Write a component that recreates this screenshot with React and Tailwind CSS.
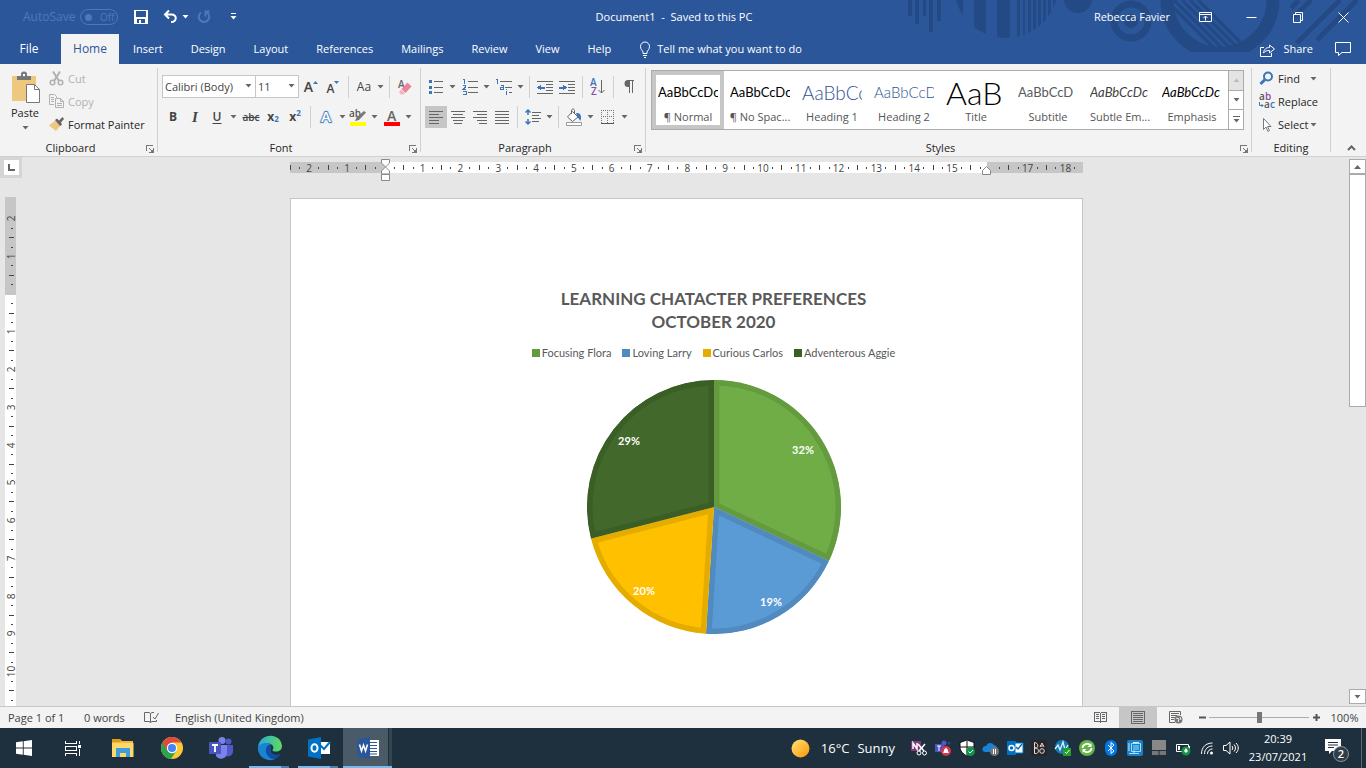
import React from "react";

const TABS = ["Insert", "Design", "Layout", "References", "Mailings", "Review", "View", "Help"];

const STYLES = [
    { name: "¶ Normal", sample: "AaBbCcDc", look: "text-[13px] text-black", active: true },
    { name: "¶ No Spac...", sample: "AaBbCcDc", look: "text-[13px] text-black" },
    { name: "Heading 1", sample: "AaBbCc", look: "text-[19px] font-light text-[#2f5496]" },
    { name: "Heading 2", sample: "AaBbCcD", look: "text-[15px] font-light text-[#2f5496]" },
    { name: "Title", sample: "AaB", look: "text-[32px] font-light text-black" },
    { name: "Subtitle", sample: "AaBbCcD", look: "text-[13px] text-[#5a5a5a]" },
    { name: "Subtle Em...", sample: "AaBbCcDc", look: "text-[13px] italic text-[#404040]" },
    { name: "Emphasis", sample: "AaBbCcDc", look: "text-[13px] italic text-black" },
];

const SLICES = [
    { label: "Focusing Flora", value: 32, fill: "#70ad47", edge: "#649b3f", x: 216, y: 75 },
    { label: "Loving Larry", value: 19, fill: "#5b9bd5", edge: "#518abf", x: 184, y: 227 },
    { label: "Curious Carlos", value: 20, fill: "#ffc000", edge: "#e5ac00", x: 57, y: 216 },
    { label: "Adventerous Aggie", value: 29, fill: "#43682b", edge: "#3b5d26", x: 42, y: 66 },
];

/* ---------- small shared parts ---------- */

function Svg({ w = 16, h = 16, children, ...rest }) {
    return (
        <svg width={w} height={h} viewBox={`0 0 ${w} ${h}`} fill="none" className="shrink-0 overflow-visible" aria-hidden="true" {...rest}>
            {children}
        </svg>
    );
}

function Caret({ color = "#666" }) {
    return (
        <Svg w={7} h={4}>
            <path d="M0.5 0h6L3.5 3.5z" fill={color} />
        </Svg>
    );
}

function Tool({ label, className = "", children }) {
    return (
        <button type="button" aria-label={label} className={`flex h-[22px] w-[22px] shrink-0 items-center justify-center ${className}`}>
            {children}
        </button>
    );
}

function Drop({ label }) {
    return (
        <button type="button" aria-label={`${label} options`} className="flex h-[22px] w-[10px] shrink-0 items-center justify-center">
            <Caret />
        </button>
    );
}

function Sep() {
    return <span className="mx-1 h-[22px] w-px shrink-0 bg-[#d2d0ce]" />;
}

function Group({ title, launcher = true, className = "", children }) {
    return (
        <section aria-label={title} className={`flex shrink-0 flex-col ${className}`}>
            <div className="h-[76px]">{children}</div>
            <div className="flex h-4 items-center">
                <span className="flex-1 text-center">{title}</span>
                {launcher && (
                    <button type="button" aria-label={`${title} settings`} className="flex w-4 justify-end pr-[3px]">
                        <Svg w={9} h={9} shapeRendering="crispEdges">
                            <path d="M1.5 7V1.5H8M4 4l3 3M8.5 4v4.5H4" stroke="#777" />
                            <path d="M5 8h3V5z" fill="#777" />
                        </Svg>
                    </button>
                )}
            </div>
        </section>
    );
}

function Divider() {
    return <span className="mt-1 h-[84px] w-px shrink-0 bg-[#d2d0ce]" />;
}

/* ---------- title bar and tabs ---------- */

function HeaderArt() {
    const bars = [[66, 7], [84, 12], [107, 13], [127, 3], [133, 2], [138, 3], [143, 3], [148, 3], [153, 3], [158, 3], [163, 3]];
    return (
        <svg width="476" height="64" viewBox="0 0 476 64" className="absolute top-0 right-0" aria-hidden="true">
            <defs>
                <clipPath id="disc"><circle cx="116" cy="-14" r="52" /></clipPath>
                <clipPath id="ring"><circle cx="330" cy="0" r="48" /></clipPath>
                <clipPath id="cut"><rect width="476" height="52" /></clipPath>
            </defs>
            <g fill="#244a85">
                <path d="M18 0h4v16h-4zM25 0h4v24h-4zM33 0h3v16h-3zM39 0h4v32h-4zM47 0h4v21h-4z" />
                <g clipPath="url(#disc)">
                    {bars.map(([x, w]) => <rect key={x} x={x} width={w} height="40" />)}
                </g>
                <circle cx="188" cy="-1" r="14" />
                <circle cx="241" cy="21" r="7" />
            </g>
            <g fill="none" stroke="#244a85">
                <circle cx="241" cy="21" r="17" strokeWidth="7" />
                <circle cx="330" cy="0" r="53" strokeWidth="13" clipPath="url(#cut)" />
                <g strokeWidth="3.5" clipPath="url(#ring)">
                    <path d="M276 0l52 52M284 0l52 52M292 0l52 52M300 0l52 52M308 0l52 52" />
                </g>
                <g strokeWidth="5">
                    <path d="M401 8l8-8M403 18l18-18M407 43l43-43M427 40l40-40" />
                </g>
            </g>
        </svg>
    );
}

function TitleBar() {
    return (
        <div className="relative flex h-[34px] items-center">
            <div className="flex flex-1 basis-0 items-center text-[#4c79bd]">
                <label htmlFor="autosave" className="ml-[23px] w-[57px] text-[12px]">AutoSave</label>
                <button id="autosave" type="button" role="switch" aria-checked="false" className="flex h-4 w-[38px] items-center gap-2 rounded-full border border-[#4c79bd] pl-1 text-[10px]">
                    <span className="h-[7px] w-[7px] rounded-full bg-[#4c79bd]" />
                    Off
                </button>
                <button type="button" aria-label="Save" className="ml-4">
                    <Svg w={14} h={14} shapeRendering="crispEdges">
                        <path d="M0 0h14v14H0zM2 1v6h10V1zM3 9v4h2v-3h2v3h4V9z" fill="#fff" fillRule="evenodd" />
                    </Svg>
                </button>
                <button type="button" aria-label="Undo" className="ml-[15px]">
                    <Svg w={14} h={14}>
                        <path d="M2 4.500h6.500c6 0 5.500 7.500-.5 7.500M6 .5l-4 4 4 4" stroke="#fff" strokeWidth="2" />
                    </Svg>
                </button>
                <button type="button" aria-label="Undo options" className="ml-[5px]"><Caret color="#fff" /></button>
                <button type="button" aria-label="Redo" className="ml-2">
                    <Svg w={14} h={14}>
                        <path d="M4 2.500a5.200 5.200 0 1 0 6 0M7.500 1.500h5M8.500 1.500v5" stroke="#4c79bd" strokeWidth="2" />
                    </Svg>
                </button>
                <button type="button" aria-label="Customise toolbar" className="ml-[19px]">
                    <Svg w={7} h={8}>
                        <path d="M1 .5h5" stroke="#fff" />
                        <path d="M.5 3h6L3.500 6.500z" fill="#fff" />
                    </Svg>
                </button>
            </div>
            <h1 className="pr-[18px] whitespace-pre text-white">{"Document1  -  Saved to this PC"}</h1>
            <div className="flex flex-1 basis-0 items-center justify-end text-white">
                <span className="mr-3">Rebecca Favier</span>
                <WindowButton label="Ribbon display options">
                    <path d="M1.500 2.500h12v9h-12zM1.500 4.500h12M7.500 10.500v-4M5.500 8l2-2 2 2" />
                </WindowButton>
                <WindowButton label="Minimise"><path d="M2.500 7.500h10" /></WindowButton>
                <WindowButton label="Restore"><path d="M3.500 4.500h7v8h-7zM5.500 4V2.500h7v8H11" /></WindowButton>
                <WindowButton label="Close"><path d="M2.500 2.500l10 10M12.500 2.500l-10 10" /></WindowButton>
            </div>
        </div>
    );
}

function WindowButton({ label, children }) {
    return (
        <button type="button" aria-label={label} className="flex h-[30px] w-[46px] items-center justify-center">
            <Svg w={15} h={15} stroke="#fff">{children}</Svg>
        </button>
    );
}

function TabBar() {
    return (
        <nav className="relative flex h-[30px] items-stretch text-white">
            <button type="button" className="w-[61px] pr-[3px] text-[12px]">File</button>
            <button type="button" className="w-[58px] bg-[#f3f3f3] text-[12px] text-[#2b579a]">Home</button>
            {TABS.map((tab) => (
                <button key={tab} type="button" className="px-[14px]">{tab}</button>
            ))}
            <button type="button" className="flex items-center gap-[6px] pl-[14px]">
                <Svg w={12} h={17} stroke="#fff">
                    <path d="M4 12.500v-1.500C3.500 9.500 1.500 8.500 1.500 5.500a4.500 4.500 0 0 1 9 0c0 3-2 4-2.500 5.500v1.500zM4 14.500h4M5 16.500h2" />
                </Svg>
                Tell me what you want to do
            </button>
            <button type="button" className="ml-auto flex items-center gap-2">
                <Svg w={15} h={15} stroke="#fff">
                    <path d="M4 5.500H.5v9h11V11M3.500 11c.5-4 3-5.500 6-5.500V3l5 4-5 4V8.500c-3 0-4.500.5-6 2.500z" />
                </Svg>
                Share
            </button>
            <button type="button" aria-label="Comments" className="mr-[15px] ml-[22px]">
                <Svg w={16} h={16} stroke="#fff"><path d="M.5 1.500h15v10H7l-3.500 3v-3h-3z" /></Svg>
            </button>
        </nav>
    );
}

/* ---------- ribbon ---------- */

function ClipboardGroup() {
    return (
        <Group title="Clipboard" className="w-[157px]">
            <div className="flex pt-[3px] pl-2">
                <button type="button" className="flex w-[34px] flex-col items-center pt-1">
                    <Svg w={30} h={32}>
                        <path d="M2 5h24v25H2z" fill="#edc87e" />
                        <path d="M7 5h4V3.500a3 3 0 0 1 6 0V5h4v4H7z" fill="#777" />
                        <circle cx="14" cy="4" r="1.200" fill="#fff" />
                        <path d="M16.500 13.500h8l5 5v13h-13z" fill="#fff" stroke="#777" />
                        <path d="M24.500 13.500v5h5" stroke="#777" />
                    </Svg>
                    <span className="pt-[2px] leading-4">Paste</span>
                    <span className="pt-[5px]"><Caret /></span>
                </button>
                <div className="ml-[7px] flex flex-col">
                    <button type="button" className="flex h-[23px] items-center gap-1 text-[#b1b1b1]">
                        <Svg w={15} h={15} stroke="#b1b1b1" strokeWidth="1.500">
                            <path d="M4 .5l6 9.500M11 .5L5 10" strokeWidth="2" />
                            <circle cx="3.500" cy="11.500" r="2.300" /><circle cx="11.500" cy="11.500" r="2.300" />
                        </Svg>
                        Cut
                    </button>
                    <button type="button" className="flex h-[23px] items-center gap-1 text-[#b1b1b1]">
                        <Svg w={15} h={15} stroke="#b1b1b1">
                            <path d="M5 10.500H.5v-10h5l2 2V4M2 3.500h3M2 5.500h3M2 7.500h3" />
                            <path d="M6.500 4.500h5l3 3v6h-8zM11.500 4.500v3h3M8 9.500h5M8 11.500h5" />
                        </Svg>
                        Copy
                    </button>
                    <button type="button" className="flex h-[23px] items-center gap-1">
                        <Svg w={15} h={15}>
                            <path d="M7 3l5 5-5 6L0 8.500z" fill="#edc87e" />
                            <path d="M6 3l2-1.500 2 2L13.500 0 15 2l-3 3.500 1 2-2 1.500z" fill="#666" />
                        </Svg>
                        Format Painter
                    </button>
                </div>
            </div>
        </Group>
    );
}

function Combo({ label, value, className }) {
    return (
        <span className={`relative h-[23px] ${className}`}>
            <select aria-label={label} defaultValue={value} className="h-full w-full appearance-none border border-[#c6c6c6] bg-white pl-[2px] text-[#444]">
                <option>{value}</option>
            </select>
            <span className="pointer-events-none absolute top-[9px] right-1"><Caret /></span>
        </span>
    );
}

function FontGroup() {
    return (
        <Group title="Font" className="w-[262px]">
            <div className="flex flex-col gap-2 pt-[11px] pl-1 text-[#444]">
                <div className="flex items-center">
                    <Combo label="Font" value="Calibri (Body)" className="w-[94px]" />
                    <Combo label="Font size" value="11" className="-ml-px w-[44px]" />
                    <Tool label="Grow font" className="ml-px">
                        <span className="text-[14px] font-semibold">A</span>
                        <Svg w={5} h={12}><path d="M0 3h5L2.500 0z" fill="#3a76b8" /></Svg>
                    </Tool>
                    <Tool label="Shrink font">
                        <span className="pt-1 text-[12px] font-semibold">A</span>
                        <Svg w={5} h={12}><path d="M0 0h5L2.500 3z" fill="#3a76b8" /></Svg>
                    </Tool>
                    <Sep />
                    <Tool label="Change case"><span className="text-[12px]">Aa</span></Tool>
                    <Drop label="Change case" />
                    <Sep />
                    <Tool label="Clear formatting">
                        <Svg w={16} h={16}>
                            <text x="1" y="9" fontSize="10" fontWeight="600" fill="#666">A</text>
                            <path d="M10.500 3.500l4 4-6 6.500-4-4z" fill="#e88597" />
                            <path d="M4 10.500l4 4-2 1h-2l-2-2z" fill="#f0b6c0" />
                        </Svg>
                    </Tool>
                </div>
                <div className="flex items-center">
                    <Tool label="Bold"><b className="text-[12px]">B</b></Tool>
                    <Tool label="Italic"><i className="font-['Liberation_Serif',serif] text-[15px] font-bold">I</i></Tool>
                    <Tool label="Underline"><span className="text-[12px] font-semibold underline underline-offset-2">U</span></Tool>
                    <Drop label="Underline" />
                    <Tool label="Strikethrough" className="ml-[2px]"><s className="text-[10px] font-semibold">abc</s></Tool>
                    <Tool label="Subscript"><b className="text-[12px]">x</b><sub className="text-[8px] font-bold text-[#3a76b8]">2</sub></Tool>
                    <Tool label="Superscript"><b className="text-[12px]">x</b><sup className="text-[8px] font-bold text-[#3a76b8]">2</sup></Tool>
                    <Sep />
                    <Tool label="Text effects">
                        <Svg w={18} h={18}>
                            <text x="4" y="14" fontSize="15" fontWeight="600" fill="#fff" stroke="#b9d5ef" strokeWidth="3" strokeLinejoin="round">A</text>
                            <text x="4" y="14" fontSize="15" fontWeight="600" fill="#fff" stroke="#3a76b8" strokeWidth="1.500" paintOrder="stroke">A</text>
                        </Svg>
                    </Tool>
                    <Drop label="Text effects" />
                    <Tool label="Highlight">
                        <Svg w={18} h={18}>
                            <text x="0" y="9" fontSize="10" fontWeight="600" fill="#555">ab</text>
                            <path d="M15 3l2 1.500-7 7.500-4 1 1.500-3.500z" fill="#777" />
                            <path d="M1 14h16v4H1z" fill="#ff0" />
                        </Svg>
                    </Tool>
                    <Drop label="Highlight" />
                    <Tool label="Font colour" className="ml-[2px]">
                        <Svg w={18} h={18}>
                            <text x="4" y="13" fontSize="14" fontWeight="600" fill="#666">A</text>
                            <path d="M1 14h16v4H1z" fill="#f00" />
                        </Svg>
                    </Tool>
                    <Drop label="Font colour" />
                </div>
            </div>
        </Group>
    );
}

function Lines({ d, children }) {
    return (
        <Svg w={16} h={16} shapeRendering="crispEdges">
            <path d={d} stroke="#666" />
            {children}
        </Svg>
    );
}

function ParagraphGroup() {
    return (
        <Group title="Paragraph" className="w-[224px]">
            <div className="flex flex-col gap-2 pt-[11px] pl-1">
                <div className="flex h-[23px] items-center">
                    <Tool label="Bullets">
                        <Lines d="M6 2.500h9M6 8.500h9M6 13.500h9">
                            <path d="M1 1h3v3H1zM1 7h3v3H1zM1 12h3v3H1z" fill="#3a76b8" />
                        </Lines>
                    </Tool>
                    <Drop label="Bullets" />
                    <Tool label="Numbering" className="ml-[2px]">
                        <Lines d="M6 2.500h10M6 8.500h10M6 13.500h10">
                            <path d="M1 .5h1.500V5M1 6.500h2.500v1.500L1 10.500h3M1 12.500h3v3H1" stroke="#3a76b8" />
                        </Lines>
                    </Tool>
                    <Drop label="Numbering" />
                    <Tool label="Multilevel list" className="ml-[2px]">
                        <Lines d="M4 2.500h12M9 8.500h7M13 13.500h3">
                            <path d="M0 .5h1.500V5M5 6.500h2v4H4.500v-2H7M10.500 10v1M10.500 12v4" stroke="#3a76b8" />
                        </Lines>
                    </Tool>
                    <Drop label="Multilevel list" />
                    <Sep />
                    <Tool label="Decrease indent">
                        <Lines d="M0 2.500h16M9 5.500h7M9 8.500h7M9 11.500h7M0 14.500h16">
                            <path d="M0 8.500l4-3v2h4v2H4v2z" fill="#3a76b8" />
                        </Lines>
                    </Tool>
                    <Tool label="Increase indent">
                        <Lines d="M0 2.500h16M9 5.500h7M9 8.500h7M9 11.500h7M0 14.500h16">
                            <path d="M8 8.500l-4-3v2H0v2h4v2z" fill="#3a76b8" />
                        </Lines>
                    </Tool>
                    <Sep />
                    <Tool label="Sort">
                        <Svg w={16} h={18}>
                            <text x="0" y="8" fontSize="10" fontWeight="600" fill="#3a76b8">A</text>
                            <text x="1" y="17" fontSize="10" fontWeight="600" fill="#8a4aa8">Z</text>
                            <path d="M11.500 2v13M8.500 12l3 3 3-3" stroke="#666" />
                        </Svg>
                    </Tool>
                    <Sep />
                    <Tool label="Show formatting marks">
                        <Svg w={12} h={14}>
                            <path d="M11 0H5a3.500 3.500 0 0 0 0 7h1v6h1V1h2v12h1V1h1z" fill="#666" />
                        </Svg>
                    </Tool>
                </div>
                <div className="flex items-center">
                    <Tool label="Align left" className="bg-[#c6c6c6]"><Lines d="M1 2.500h14M1 5.500h10M1 8.500h14M1 11.500h10M1 14.500h10" /></Tool>
                    <Tool label="Centre"><Lines d="M1 2.500h14M3 5.500h10M1 8.500h14M3 11.500h10M4 14.500h8" /></Tool>
                    <Tool label="Align right"><Lines d="M1 2.500h14M5 5.500h10M1 8.500h14M5 11.500h10M7 14.500h8" /></Tool>
                    <Tool label="Justify"><Lines d="M1 2.500h14M1 5.500h14M1 8.500h14M1 11.500h14M1 14.500h14" /></Tool>
                    <Sep />
                    <Tool label="Line spacing">
                        <Lines d="M7 3.500h9M7 6.500h7M7 9.500h9M7 12.500h7">
                            <path d="M3 1v5M3 10v5M.5 3.500L3 1l2.500 2.500M.5 12.500L3 15l2.500-2.500" stroke="#3a76b8" strokeWidth="1.500" shapeRendering="auto" />
                        </Lines>
                    </Tool>
                    <Drop label="Line spacing" />
                    <Sep />
                    <Tool label="Shading">
                        <Svg w={18} h={18}>
                            <path d="M7.500 3.500l5.500 5.500-5.500 4.500L2.500 9z" fill="#fff" stroke="#666" />
                            <path d="M6.500 6V2.500c0-2 3-2 3 0V5" stroke="#666" />
                            <path d="M11 5c4-.5 6 2 4.500 8L12.500 9z" fill="#3a76b8" />
                            <path d="M1.500 14.500h15v3h-15z" fill="#fff" stroke="#999" />
                        </Svg>
                    </Tool>
                    <Drop label="Shading" />
                    <Tool label="Borders" className="ml-[2px]">
                        <Svg w={14} h={14} shapeRendering="crispEdges" stroke="#777">
                            <path d="M.5 0v13M0 .5h13M12.500 0v13M6.500 0v13M0 6.500h13" strokeDasharray="1 1" />
                            <path d="M0 13h13" stroke="#555" strokeWidth="1" />
                        </Svg>
                    </Tool>
                    <Drop label="Borders" />
                </div>
            </div>
        </Group>
    );
}

function StylesGroup() {
    return (
        <Group title="Styles" className="min-w-0 flex-1">
            <div className="pt-[6px] pr-[7px] pl-[5px]">
                <div className="flex h-[60px] overflow-hidden border border-[#ababab] bg-white">
                    <div className="flex min-w-0 flex-1 overflow-hidden">
                        {STYLES.map((style) => (
                            <button
                                key={style.name}
                                type="button"
                                className={`flex w-[72px] shrink-0 flex-col items-center border-4 pt-1 ${style.active ? "border-[#c6c6c6]" : "border-transparent"}`}
                            >
                                <span className={`flex h-[27px] w-[60px] shrink-0 items-center overflow-hidden font-['Lato','Open_Sans',sans-serif] leading-none whitespace-nowrap ${style.look}`}>
                                    {style.sample}
                                </span>
                                <span className="pt-[3px] leading-4 whitespace-nowrap text-[#555]">{style.name}</span>
                            </button>
                        ))}
                    </div>
                    <div className="flex w-[15px] flex-col divide-y divide-[#ababab] border-l border-[#ababab]">
                        <button type="button" aria-label="Previous styles" className="flex flex-1 items-center justify-center bg-[#e3e3e3]">
                            <Svg w={7} h={4}><path d="M.5 4h6L3.500.5z" fill="#bbb" /></Svg>
                        </button>
                        <button type="button" aria-label="Next styles" className="flex flex-1 items-center justify-center"><Caret /></button>
                        <button type="button" aria-label="More styles" className="flex flex-1 items-center justify-center">
                            <Svg w={7} h={7}><path d="M0 0h7v1H0zM.5 3h6L3.500 6.500z" fill="#666" /></Svg>
                        </button>
                    </div>
                </div>
            </div>
        </Group>
    );
}

function EditingGroup() {
    return (
        <Group title="Editing" launcher={false} className="w-[78px]">
            <div className="flex flex-col pt-[3px] pl-[7px]">
                <button type="button" className="flex h-[23px] items-center">
                    <Svg w={15} h={15}>
                        <circle cx="9" cy="5.500" r="4" stroke="#3a76b8" strokeWidth="2" />
                        <path d="M6 8.500L1.500 13" stroke="#3a76b8" strokeWidth="3" />
                    </Svg>
                    <span className="w-[32px] pl-1 text-left">Find</span>
                    <span className="pl-[4px]"><Caret /></span>
                </button>
                <button type="button" className="flex h-[23px] items-center gap-1">
                    <Svg w={15} h={17}>
                        <text x="0" y="7" fontSize="10" fontWeight="600" fill="#555">a</text>
                        <text x="6" y="7" fontSize="10" fontWeight="600" fill="#8a4aa8">b</text>
                        <text x="5" y="15" fontSize="10" fontWeight="600" fill="#555">a</text>
                        <text x="11" y="15" fontSize="10" fontWeight="600" fill="#3a76b8">c</text>
                        <path d="M.5 9v3.500H4M2.500 11L4 12.500 2.500 14" stroke="#3a76b8" />
                    </Svg>
                    Replace
                </button>
                <button type="button" className="flex h-[23px] items-center gap-1">
                    <Svg w={15} h={16}>
                        <path d="M4.500 1.500v11L7 10l2 4.500 1.500-1L8.500 9.500H12z" fill="#fff" stroke="#777" />
                    </Svg>
                    <span className="flex items-center gap-[2px]">Select <Caret /></span>
                </button>
            </div>
        </Group>
    );
}

function Ribbon() {
    return (
        <div className="flex h-[93px] shrink-0 border-b border-[#d2d0ce] bg-[#f3f3f3] text-[#262626]">
            <ClipboardGroup />
            <Divider />
            <FontGroup />
            <Divider />
            <ParagraphGroup />
            <Divider />
            <StylesGroup />
            <Divider />
            <EditingGroup />
            <Divider />
            <button type="button" aria-label="Collapse ribbon" className="flex w-[35px] items-end justify-center pb-[5px] pl-[6px]">
                <Svg w={9} h={6}><path d="M1 5l3.500-3.500L8 5" stroke="#666" strokeWidth="2" /></Svg>
            </button>
        </div>
    );
}

/* ---------- rulers ---------- */

// One cell is a quarter of a centimetre: number, dot, tick, dot
function rulerCells(from, to, hidden) {
    const cells = [];
    for (let i = from; i <= to; i++) {
        const step = Math.abs(i) % 4;
        if (step === 0) cells.push(hidden.includes(i / 4) ? "" : String(Math.abs(i / 4)));
        else cells.push(step === 2 ? "tick" : "dot");
    }
    return cells;
}

function HorizontalRuler() {
    return (
        <div className="relative mx-auto mt-[5px] flex h-[11px] w-[793px] shrink-0 items-center bg-[linear-gradient(to_right,#c6c6c6_95px,#fff_95px,#fff_697px,#c6c6c6_697px)] pr-[3px]">
            <span className="h-[5px] w-px bg-[#444]" />
            <span className="w-[4px]" />
            <div className="flex flex-1 items-center">
                {rulerCells(-9, 73, [0, 16]).map((cell, i) => (
                    <span key={i} className="flex h-[11px] w-0 flex-1 items-center justify-center text-[10px] text-[#444]">
                        {cell === "tick" && <span className="h-[5px] w-px bg-[#444]" />}
                        {cell === "dot" && <span className="h-[2px] w-px bg-[#444]" />}
                        {cell !== "tick" && cell !== "dot" && cell}
                    </span>
                ))}
            </div>
            <svg width="9" height="22" viewBox="0 0 9 22" fill="#fff" stroke="#888" className="absolute -top-[3px] left-[91px]" aria-hidden="true">
                <path d="M.5.5h8V4L4.500 8 .5 4zM4.500 8l4 4v3h-8v-3zM.5 15.500h8v6h-8z" />
            </svg>
            <svg width="9" height="9" viewBox="0 0 9 9" fill="#fff" stroke="#888" className="absolute top-[4px] left-[692px]" aria-hidden="true">
                <path d="M4.500.5l4 4v4h-8v-4z" />
            </svg>
        </div>
    );
}

function VerticalRuler() {
    return (
        <div className="ml-[5px] flex min-h-0 w-[11px] flex-1 flex-col overflow-hidden bg-[linear-gradient(to_bottom,#c6c6c6_98px,#fff_98px)] pt-[17px]">
            <div className="flex h-[491px] shrink-0 flex-col">
                {rulerCells(-8, 43, [0]).map((cell, i) => (
                    <span key={i} className="flex h-0 flex-1 items-center justify-center pl-[2px] text-[10px] text-[#444]">
                        {cell === "tick" && <span className="h-px w-[5px] bg-[#444]" />}
                        {cell === "dot" && <span className="h-px w-[2px] bg-[#444]" />}
                        {cell !== "tick" && cell !== "dot" && <span className="-rotate-90 leading-[11px]">{cell}</span>}
                    </span>
                ))}
            </div>
        </div>
    );
}

/* ---------- document ---------- */

function PieChart() {
    const c = 127;
    let total = 0;
    const point = (percent) => {
        const a = (percent / 100) * Math.PI * 2;
        return `${c + c * Math.sin(a)} ${c - c * Math.cos(a)}`;
    };
    const paths = SLICES.map((slice) => {
        const start = total;
        total += slice.value;
        return `M${c} ${c}L${point(start)}A${c} ${c} 0 0 1 ${point(total)}z`;
    });
    return (
        <svg width="254" height="254" viewBox="0 0 254 254" role="img" aria-label="Learning character preferences">
            {SLICES.map((slice, i) => (
                <g key={slice.label}>
                    <clipPath id={`slice${i}`}><path d={paths[i]} /></clipPath>
                    <path d={paths[i]} fill={slice.fill} stroke={slice.edge} strokeWidth="11" clipPath={`url(#slice${i})`} />
                    <text x={slice.x} y={slice.y - 1} fill="#fff" fontSize="11" fontWeight="700" textAnchor="middle" className="font-['Lato','Open_Sans',sans-serif]">
                        {slice.value}%
                    </text>
                </g>
            ))}
        </svg>
    );
}

function Page() {
    return (
        <main className="mx-auto mt-[25px] flex min-h-0 w-[793px] flex-1 flex-col items-center overflow-hidden border border-b-0 border-[#c6c6c6] bg-white pt-[88px] pl-[54px] font-['Lato','Open_Sans',sans-serif]">
            <h2 className="text-center text-[17px] leading-[23px] font-bold text-[#595959]">
                LEARNING CHATACTER PREFERENCES
                <br />
                OCTOBER 2020
            </h2>
            <ul className="mt-[10px] mb-[17px] flex gap-[11px] text-[11px] leading-5 text-[#595959]">
                {SLICES.map((slice) => (
                    <li key={slice.label} className="flex items-center gap-[2px]">
                        <span className="h-2 w-2" style={{ background: slice.edge }} />
                        {slice.label}
                    </li>
                ))}
            </ul>
            <PieChart />
        </main>
    );
}

function Workspace() {
    return (
        <div className="flex min-h-0 flex-1 bg-[#e6e6e6]">
            <div className="flex w-6 flex-col">
                <div className="mb-[19px] flex h-[21px] w-[22px] items-center justify-center bg-[#d5d5d5]">
                    <button type="button" aria-label="Tab stop" className="flex h-[15px] w-[15px] items-center justify-center bg-white">
                        <Svg w={7} h={7}><path d="M1 0v6h6" stroke="#666" strokeWidth="2" /></Svg>
                    </button>
                </div>
                <VerticalRuler />
            </div>
            <div className="flex min-w-0 flex-1 flex-col">
                <HorizontalRuler />
                <Page />
            </div>
            <div className="flex w-[17px] flex-col items-stretch py-[2px]">
                <button type="button" aria-label="Scroll up" className="flex h-[15px] items-center justify-center border border-[#ababab] bg-white">
                    <Svg w={7} h={4}><path d="M0 4h7L3.500 0z" fill="#666" /></Svg>
                </button>
                <span className="h-[233px] border border-[#ababab] bg-white" />
                <button type="button" aria-label="Scroll down" className="mt-auto flex h-[15px] items-center justify-center border border-[#ababab] bg-white">
                    <Caret />
                </button>
            </div>
        </div>
    );
}

function StatusBar() {
    return (
        <footer className="flex h-[22px] shrink-0 items-center border-t border-[#c6c6c6] bg-[#f3f3f3] pl-2 text-[#444]">
            <span className="w-[76px]">Page 1 of 1</span>
            <span className="w-[60px]">0 words</span>
            <button type="button" aria-label="Proofing" className="w-[31px]">
                <Svg w={15} h={13} stroke="#666">
                    <path d="M6.500 2.500L5 1.500H.5v9H5l1.500 1 1.500-1h4.500V9M6.500 2.500v9M6.500 2.500L8 1.500h2M9 6l2 2 3.500-6" />
                </Svg>
            </button>
            <span>English (United Kingdom)</span>
            <div className="ml-auto flex h-full items-center">
                <button type="button" aria-label="Read mode" className="flex h-full w-[38px] items-center justify-center">
                    <Svg w={13} h={13} stroke="#666" shapeRendering="crispEdges">
                        <path d="M6.500 2v10M.5 1.500h5l1 1 1-1h5v9h-5l-1 1-1-1h-5zM2 3.500h3M2 5.500h3M2 7.500h3M8 3.500h3M8 5.500h3M8 7.500h3" />
                    </Svg>
                </button>
                <button type="button" aria-label="Print layout" className="flex h-full w-[38px] items-center justify-center bg-[#c6c6c6]">
                    <Svg w={14} h={13} stroke="#666" shapeRendering="crispEdges">
                        <path d="M.5.5h13v12H.5zM2 2.500h10M2 4.500h10M2 6.500h10M2 8.500h10M2 10.500h10" />
                    </Svg>
                </button>
                <button type="button" aria-label="Web layout" className="flex h-full w-[38px] items-center justify-center">
                    <Svg w={14} h={13} stroke="#666">
                        <path d="M6 11.500H.5V.5h11V4M2 2.500h8M2 4.500h6M2 6.500h4M2 8.500h3" />
                        <circle cx="9.500" cy="8.500" r="4" fill="#777" stroke="none" />
                        <path d="M7 7l3 1-1 3M11 6l1 3" stroke="#eee" />
                    </Svg>
                </button>
                <button type="button" aria-label="Zoom out" className="flex w-[14px] justify-center"><Svg w={7} h={7}><path d="M0 3.500h7" stroke="#555" strokeWidth="2" /></Svg></button>
                <input
                    type="range"
                    aria-label="Zoom"
                    defaultValue="50"
                    className="h-3 w-[100px] appearance-none bg-[linear-gradient(#ababab,#ababab)] bg-[length:100%_1px] bg-center bg-no-repeat [&::-webkit-slider-thumb]:h-[11px] [&::-webkit-slider-thumb]:w-[5px] [&::-webkit-slider-thumb]:appearance-none [&::-webkit-slider-thumb]:bg-[#777]"
                />
                <button type="button" aria-label="Zoom in" className="flex w-[14px] justify-center"><Svg w={7} h={7}><path d="M0 3.500h7M3.500 0v7" stroke="#555" strokeWidth="2" /></Svg></button>
                <button type="button" className="w-[43px]">100%</button>
            </div>
        </footer>
    );
}

/* ---------- taskbar ---------- */

function TaskButton({ label, state, children }) {
    return (
        <button type="button" aria-label={label} className={`relative flex w-[49px] items-center justify-center ${state === "active" ? "bg-[#4a5a67]" : ""}`}>
            {children}
            {state === "open" && (
                <span className="absolute bottom-0 left-1 flex h-[2px] w-10">
                    <span className="flex-1 bg-[#76b9ed]" /><span className="w-2 bg-[#4f7fa8]" />
                </span>
            )}
            {state === "active" && (
                <span className="absolute inset-0 flex flex-col">
                    <span className="ml-auto w-1 flex-1 border-l border-[#1f303c] bg-[#33454f]" />
                    <span className="h-[2px] bg-[#76b9ed]" />
                </span>
            )}
        </button>
    );
}

function TrayIcon({ label, children }) {
    return (
        <button type="button" aria-label={label} className="flex w-6 items-center justify-center">
            <Svg>{children}</Svg>
        </button>
    );
}

function Taskbar() {
    return (
        <div className="flex h-10 shrink-0 bg-[#1e303d] text-white">
            <button type="button" aria-label="Start" className="flex w-12 items-center justify-center">
                <Svg w={16} h={16}><path d="M0 2.300L6.800 1.300v6.200H0zM7.700 1.200L16 0v7.500H7.700zM0 8.500h6.800v6.200L0 13.700zM7.700 8.500H16V16l-8.300-1.200z" fill="#fff" /></Svg>
            </button>
            <button type="button" aria-label="Task view" className="flex w-[50px] items-center justify-center">
                <Svg w={17} h={15} stroke="#fff" shapeRendering="crispEdges">
                    <path d="M.5 0v2.500h11V0M.5 15v-2.500h11V15M.5 5.500h11v4H.5zM14.500 0v3M14.500 8v7" />
                    <path d="M13 4h3v3h-3z" fill="#fff" stroke="none" />
                </Svg>
            </button>
            <TaskButton label="File Explorer">
                <Svg w={22} h={18}>
                    <path d="M0 0h8l2 2h11v16H0z" fill="#f4b93a" />
                    <path d="M0 4h21.500v14H0z" fill="#ffd869" />
                    <path d="M0 0h8l1 2-1 1H0z" fill="#dd9d16" />
                    <path d="M4 9h14v9h-4v-4H8v4H4z" fill="#3e9ddd" />
                </Svg>
            </TaskButton>
            <TaskButton label="Chrome">
                <Svg w={22} h={22}>
                    <circle cx="11" cy="11" r="11" fill="#fcc934" />
                    <path d="M11 11L1.500 5.500A11 11 0 0 0 10 22l5.500-8.500z" fill="#2fa24c" />
                    <path d="M1.500 5.500a11 11 0 0 1 19 0H11L6.500 14z" fill="#dd4b3e" />
                    <circle cx="11" cy="11" r="5.200" fill="#fff" /><circle cx="11" cy="11" r="4" fill="#4285f4" />
                </Svg>
            </TaskButton>
            <TaskButton label="Teams">
                <Svg w={24} h={22}>
                    <circle cx="19.500" cy="4.500" r="3" fill="#5059c9" /><circle cx="13" cy="3.500" r="3.500" fill="#7b83eb" />
                    <path d="M16 8h8v6a5 5 0 0 1-7 5z" fill="#5059c9" /><path d="M8 8h10v8a6 6 0 0 1-11 3z" fill="#7b83eb" />
                    <path d="M0 5h12v12H0z" fill="#4b53bc" /><path d="M3 8h6M6 8v7" stroke="#fff" strokeWidth="1.800" />
                </Svg>
            </TaskButton>
            <TaskButton label="Edge" state="open">
                <Svg w={24} h={24}>
                    <defs>
                        <linearGradient id="edgeTop" x1="0" x2="1"><stop stopColor="#2aa6e0" /><stop offset="1" stopColor="#5fdc5a" /></linearGradient>
                        <linearGradient id="edgeBase" x1="0" x2="1"><stop stopColor="#1b8bd8" /><stop offset="1" stopColor="#0c4a9c" /></linearGradient>
                    </defs>
                    <path d="M0 12a12 12 0 0 0 22.500 6c-5 2.500-12 0-9.500-7z" fill="url(#edgeBase)" />
                    <path d="M0 12C1-4 23-4 24 10c0 5-5 6.500-9 5-1.500-.6.8-1.500.3-4C14.500 6 4 5.500 0 12z" fill="url(#edgeTop)" />
                    <path d="M0 12C2 6.500 10 6 13 8.500 9 9 7 13 8.500 17c1 3 4 6 8 6A12 12 0 0 1 0 12z" fill="#1b84d2" />
                    <path d="M12.500 9C8 10 7 14 8.500 17.500c2 4.500 6 5.500 8.500 5.200 2.500-1 4.500-2.700 5.500-4.700-6 2.500-11.500-1-10.500-5.500.2-1 .8-2 1.500-2.700z" fill="#0f4f9f" />
                </Svg>
            </TaskButton>
            <TaskButton label="Outlook" state="open">
                <Svg w={22} h={22}>
                    <path d="M12 5h10v12H12z" fill="#fff" /><path d="M12 8l4 4 6-7" stroke="#0072c6" strokeWidth="2" />
                    <path d="M0 2.500L13 0v22L0 19.500z" fill="#0072c6" /><ellipse cx="6.500" cy="11" rx="3" ry="3.800" stroke="#fff" strokeWidth="2" />
                </Svg>
            </TaskButton>
            <TaskButton label="Word" state="active">
                <Svg w={22} h={22}>
                    <path d="M12 3h10v16H12z" fill="#fff" /><path d="M13 5.500h7M13 8.500h7M13 11.500h7M13 14.500h7M13 17h7" stroke="#2b579a" />
                    <path d="M0 2.500L13 0v22L0 19.500z" fill="#2b579a" /><path d="M2.500 7.500L4.500 14l2-6 2 6 2-6.500" stroke="#fff" strokeWidth="1.500" />
                </Svg>
            </TaskButton>

            <div className="ml-auto flex">
                <button type="button" className="flex items-center gap-[11px] pr-3 text-[13px]">
                    <Svg w={19} h={19}>
                        <defs><linearGradient id="sun" x2="1" y2="1"><stop stopColor="#ffe37a" /><stop offset="1" stopColor="#ff9500" /></linearGradient></defs>
                        <circle cx="9.500" cy="9.500" r="9" fill="url(#sun)" />
                    </Svg>
                    <span className="flex gap-2"><span>16°C</span><span>Sunny</span></span>
                </button>
                <TrayIcon label="OneNote clipper">
                    <path d="M0 1h10v10H0z" fill="#80397b" /><path d="M2 9V3l4 6V3" stroke="#fff" strokeWidth="1.500" />
                    <path d="M7 4l6 7M14 4l-6 7" stroke="#fff" strokeWidth="1.500" /><circle cx="8" cy="13" r="2" stroke="#fff" /><circle cx="13.500" cy="13" r="2" stroke="#fff" />
                </TrayIcon>
                <TrayIcon label="Teams notification">
                    <circle cx="9" cy="3" r="2.500" fill="#5059c9" /><circle cx="14" cy="3" r="1.500" fill="#34408a" /><path d="M0 4h9v8H0z" fill="#4b53bc" />
                    <path d="M2 6h4M4 6v5" stroke="#fff" /><circle cx="11" cy="11" r="5" fill="#d2374b" /><path d="M8 13c1-1 1-5 3-5s2 4 3 5z" fill="#fff" />
                </TrayIcon>
                <TrayIcon label="Windows Security">
                    <path d="M8 0l7 2.500v4.500c0 4-3 7-7 9-4-2-7-5-7-9V2.500z" fill="#fff" stroke="#111" /><path d="M8 1v14M1 7h14" stroke="#111" />
                    <circle cx="11.500" cy="11.500" r="4.500" fill="#13924a" /><path d="M9.500 11.500l1.500 1.500 3-3" stroke="#fff" />
                </TrayIcon>
                <TrayIcon label="OneDrive">
                    <path d="M2 12a3 3 0 0 1 1-6 4.500 4.500 0 0 1 8-1 4 4 0 0 1 2 7z" fill="#1683d9" /><circle cx="11.500" cy="11.500" r="4.500" fill="#777" />
                    <path d="M10.500 9v5M12.500 9v5" stroke="#fff" />
                </TrayIcon>
                <TrayIcon label="Outlook">
                    <path d="M0 1h9v14H0z" fill="#0072c6" /><path d="M8 3h8v10H8z" fill="#fff" stroke="#0072c6" />
                    <circle cx="4.500" cy="8" r="2.500" stroke="#fff" strokeWidth="1.500" /><path d="M9 7l2 2 4-5" stroke="#0072c6" strokeWidth="1.500" />
                </TrayIcon>
                <TrayIcon label="B and O audio">
                    <path d="M0 0h16v16H0z" fill="#2a2426" /><path d="M3.500 2.500v11h2c3-1 2-5 0-5.500h-2 2c2-1 2-5-2-5.500M9 7l2-4 2 4M9 6h3" stroke="#ddd" /><circle cx="11" cy="11" r="2.300" stroke="#ddd" />
                </TrayIcon>
                <TrayIcon label="Network monitor">
                    <circle cx="7" cy="7" r="7" fill="#1678b8" /><path d="M0 9l3-4 2 5 3-8 2 8 3-5" stroke="#d8f4ff" strokeWidth="1.300" />
                    <path d="M8 8h8v8H8z" fill="#22a028" /><path d="M10 12l1.500 1.500L14.500 10" stroke="#fff" />
                </TrayIcon>
                <TrayIcon label="Sync">
                    <circle cx="8" cy="8" r="8" fill="#63b345" /><path d="M3.500 8a4.500 4.500 0 0 1 8-2.500M12.500 8a4.500 4.500 0 0 1-8 2.500" stroke="#fff" strokeWidth="1.800" />
                    <path d="M12.500 3v4h-4zM3.500 13V9h4z" fill="#fff" />
                </TrayIcon>
                <TrayIcon label="Bluetooth">
                    <rect x="2" width="12" height="16" rx="6" fill="#0078e7" /><path d="M5 5l6 6-3 2.500V2.500L11 5l-6 6" stroke="#fff" />
                </TrayIcon>
                <TrayIcon label="Graphics settings">
                    <rect width="16" height="16" rx="2" fill="#1780c9" /><path d="M4.500 3.500h9v8h-9zM2 13.500h10M7 13V10" stroke="#a9ddff" />
                    <path d="M6 5h6v5H6z" fill="#52b2e8" /><path d="M2 3v8M6 2.500h6" stroke="#d5ecf8" />
                </TrayIcon>
                <TrayIcon label="Touchpad">
                    <path d="M1 0h14v10H1z" fill="#888" /><path d="M1 11h6.500v4H1zM8.500 11H15v4H8.500z" fill="#777" />
                </TrayIcon>
                <TrayIcon label="Battery">
                    <path d="M1.500 4.500h12v7h-12zM14.500 6v4" stroke="#fff" /><path d="M3 6h2v4H3z" fill="#fff" />
                    <circle cx="11" cy="11" r="4.500" fill="#13924a" /><path d="M11 8l2 3-2 2-2-2z" fill="#fff" />
                </TrayIcon>
                <TrayIcon label="Wi-Fi">
                    <g stroke="#fff"><path d="M2.500 14C2.500 7 7 3 13.500 3M5.500 14c0-5 3.500-8 8-8M8.500 14c0-3 2-5 5-5" /></g><circle cx="12.500" cy="13" r="1.500" fill="#fff" />
                </TrayIcon>
                <TrayIcon label="Volume">
                    <path d="M.5 5.500h2.500l4-3.500v12l-4-3.500H.5zM9 6c1 1 1 3 0 4M11 4.500c2 2 2 5 0 7M13 3c3 3 3 7 0 10" stroke="#fff" />
                </TrayIcon>
                <button type="button" className="flex w-[70px] flex-col items-center justify-center leading-[18px]">
                    <span>20:39</span>
                    <span>23/07/2021</span>
                </button>
                <button type="button" aria-label="2 notifications" className="flex w-[48px] items-center pt-1 pl-3">
                    <Svg w={25} h={25}>
                        <path d="M0 1h16v12H7l-3 3v-3H0z" fill="#fff" /><path d="M3 4.500h10M3 7h10M3 9.500h6" stroke="#1e303d" />
                        <circle cx="16" cy="16" r="7.500" fill="#333d45" stroke="#8a949b" />
                        <text x="16" y="20" fontSize="11" fontWeight="600" fill="#fff" textAnchor="middle">2</text>
                    </Svg>
                </button>
                <button type="button" aria-label="Show desktop" className="w-[5px] border-l border-[#5b6973]" />
            </div>
        </div>
    );
}

export default function App() {
    return (
        <div className="flex h-screen flex-col overflow-hidden font-['Open_Sans','Noto_Sans',sans-serif] text-[11px] leading-4">
            <header className="relative shrink-0 bg-[#2b579a]">
                <HeaderArt />
                <TitleBar />
                <TabBar />
            </header>
            <Ribbon />
            <Workspace />
            <StatusBar />
            <Taskbar />
        </div>
    );
}
